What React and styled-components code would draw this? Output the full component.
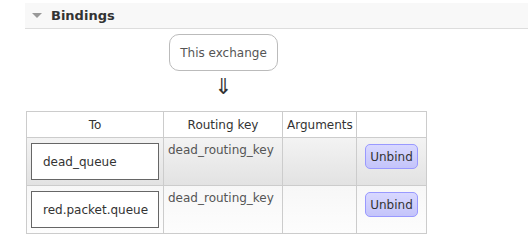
import React from 'react';
import styled, { createGlobalStyle } from 'styled-components';

const GlobalStyle = createGlobalStyle`
  *, *::before, *::after {
    box-sizing: border-box;
  }
  body {
    margin: 0;
    background: #fff;
    font-family: "DejaVu Sans", Verdana, sans-serif;
    font-size: 12px;
    color: #484848;
  }
`;

const Section = styled.div`
  margin: 3px 0 0 25px;
`;

const Header = styled.div`
  height: 26px;
  display: flex;
  align-items: center;
  gap: 9px;
  padding-left: 7px;
  background: #f8f8f8;
  border-bottom: 1px solid #ddd;
  font-weight: bold;
  font-size: 13px;
  color: #333;
`;

const Triangle = styled.span`
  width: 0;
  height: 0;
  border-left: 5px solid transparent;
  border-right: 5px solid transparent;
  border-top: 5px solid #999;
`;

const Body = styled.div`
  padding-left: 1px;
`;

const Diagram = styled.div`
  width: 395px;
  display: flex;
  flex-direction: column;
  align-items: center;
`;

const ExchangeBox = styled.div`
  margin-top: 5px;
  height: 37px;
  padding: 0 10px;
  display: flex;
  align-items: center;
  border: 1px solid #bbb;
  border-radius: 10px;
  color: #555;
`;

const Arrow = styled.div`
  margin-top: 2px;
  height: 38px;
  font-size: 22px;
  line-height: 28px;
  color: #333;
`;

const Table = styled.table`
  border-collapse: collapse;
  table-layout: fixed;
  width: 400px;
  border: 1px solid #ccc;
`;

const Th = styled.th`
  width: ${p => p.w}px;
  height: 26px;
  padding: 0 4px;
  border: 1px solid #ccc;
  font-weight: normal;
  text-align: ${p => p.align || 'center'};
  color: #333;
  background: #fff;
`;

const Row = styled.tr`
  background: ${p => (p.alt ? 'linear-gradient(#f3f3f3, #e2e2e2)' : 'linear-gradient(#f7f7f7, #fdfdfd)')};
`;

const Td = styled.td`
  height: 48px;
  padding: 5px 4px 4px 4px;
  border: 1px solid #ccc;
  vertical-align: top;
  text-align: ${p => p.align || 'left'};
`;

const QueueBox = styled.div`
  height: 37px;
  display: flex;
  align-items: center;
  padding-left: 11px;
  border: 1px solid #666;
  background: #fff;
  color: #333;
  white-space: nowrap;
`;

const KeyText = styled.div`
  line-height: 14px;
  white-space: nowrap;
  color: #555;
`;

const UnbindButton = styled.button`
  margin-top: 1px;
  height: 25px;
  padding: 0 4px;
  font-family: "DejaVu Sans", Verdana, sans-serif;
  font-size: 12px;
  color: #333;
  background: linear-gradient(#d8d8ff, #c4c4fa);
  border: 1px solid #99f;
  border-radius: 5px;
  cursor: pointer;
`;

const bindings = [
  { to: 'dead_queue', key: 'dead_routing_key' },
  { to: 'red.packet.queue', key: 'dead_routing_key' },
];

export default function App() {
  return (
    <>
      <GlobalStyle />
      <Section>
        <Header>
          <Triangle />
          Bindings
        </Header>
        <Body>
          <Diagram>
            <ExchangeBox>This exchange</ExchangeBox>
            <Arrow>⇓</Arrow>
          </Diagram>
          <Table>
            <thead>
              <tr>
                <Th w={137}>To</Th>
                <Th w={119}>Routing key</Th>
                <Th w={74} align="left">Arguments</Th>
                <Th w={70} />
              </tr>
            </thead>
            <tbody>
              {bindings.map((b, i) => (
                <Row key={b.to} alt={i % 2 === 0}>
                  <Td>
                    <QueueBox>{b.to}</QueueBox>
                  </Td>
                  <Td>
                    <KeyText>{b.key}</KeyText>
                  </Td>
                  <Td />
                  <Td align="center">
                    <UnbindButton>Unbind</UnbindButton>
                  </Td>
                </Row>
              ))}
            </tbody>
          </Table>
        </Body>
      </Section>
    </>
  );
}
